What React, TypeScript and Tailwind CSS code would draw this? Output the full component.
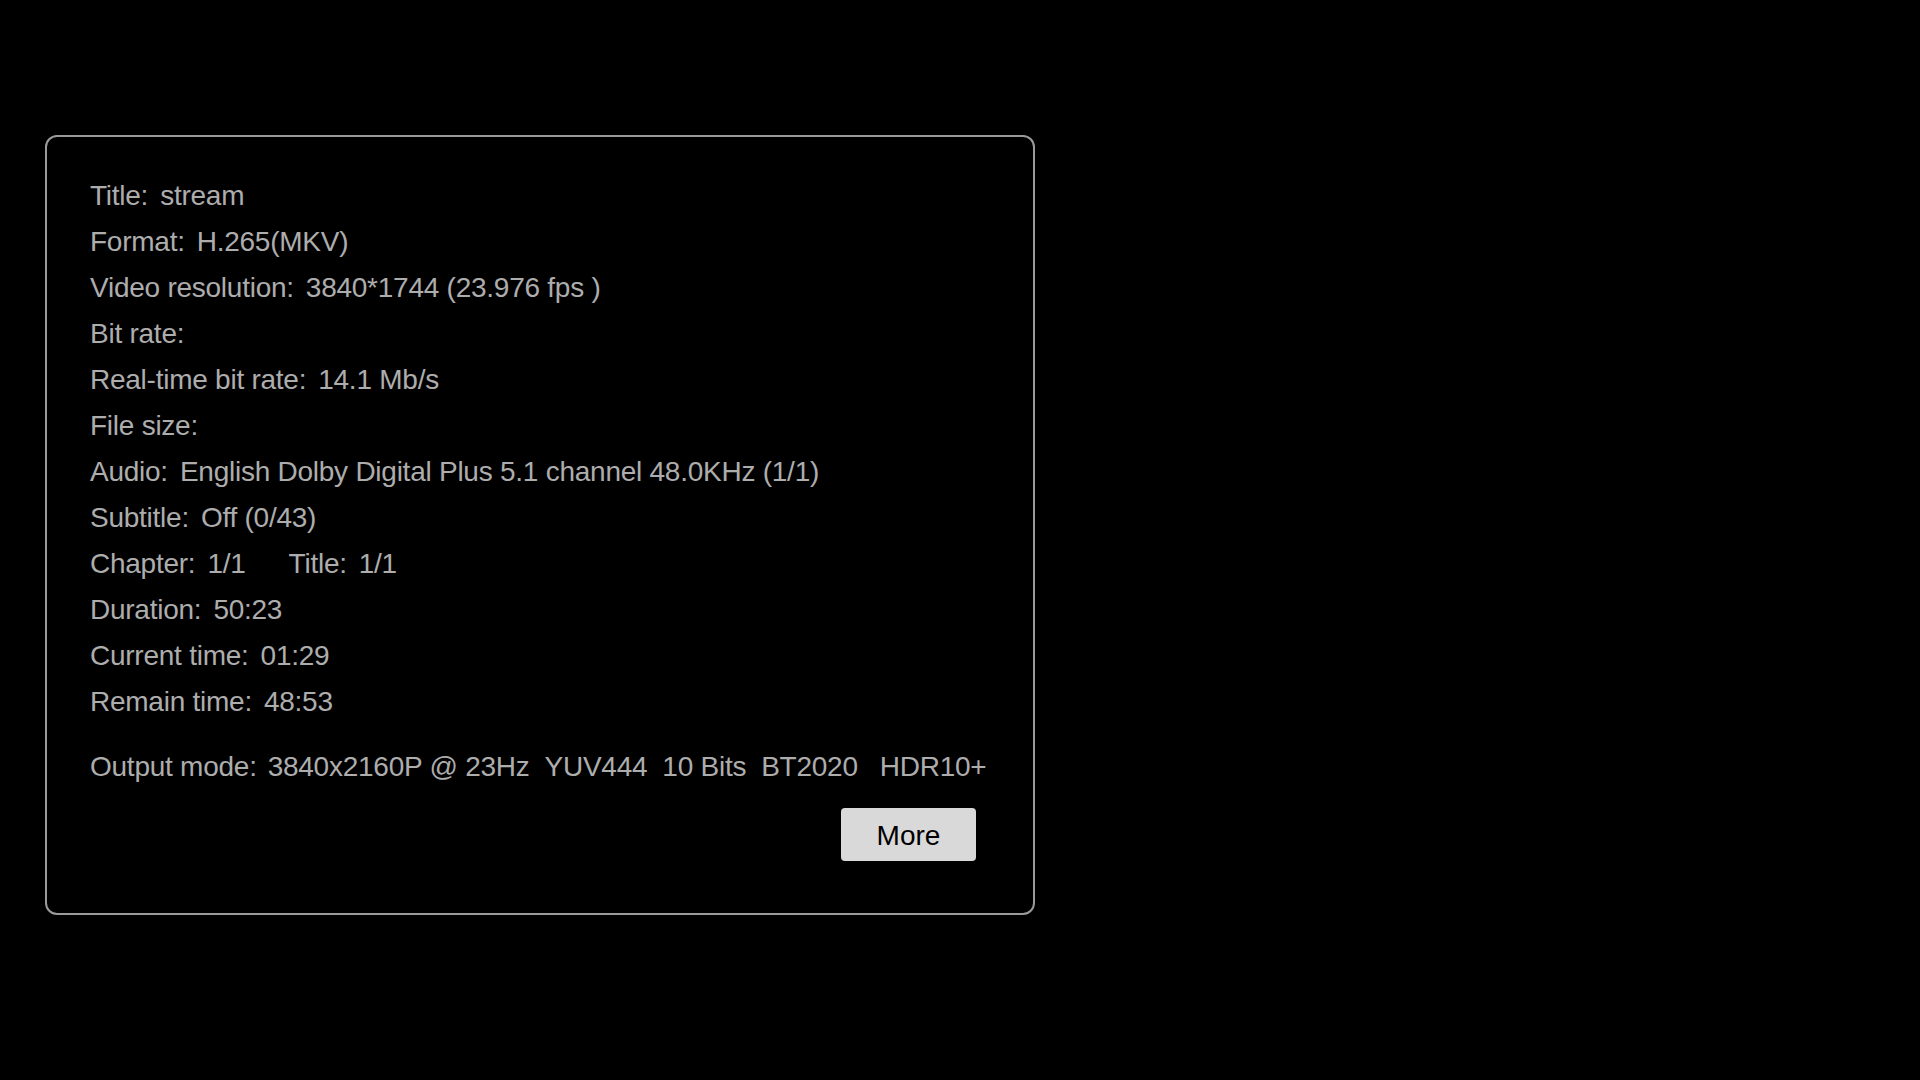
import React from "react";

const rows: [string, string][] = [
  ["Title:", "stream"],
  ["Format:", "H.265(MKV)"],
  ["Video resolution:", "3840*1744 (23.976 fps )"],
  ["Bit rate:", ""],
  ["Real-time bit rate:", "14.1 Mb/s"],
  ["File size:", ""],
  ["Audio:", "English Dolby Digital Plus 5.1 channel 48.0KHz (1/1)"],
  ["Subtitle:", "Off (0/43)"],
];

const rows2: [string, string][] = [
  ["Duration:", "50:23"],
  ["Current time:", "01:29"],
  ["Remain time:", "48:53"],
];

function Row({ label, value }: { label: string; value: string }) {
  return (
    <div className="flex h-[46px] items-center whitespace-nowrap">
      <span>{label}</span>
      {value && <span className="ml-[12px]">{value}</span>}
    </div>
  );
}

export default function App() {
  return (
    <div
      className="w-[1920px] h-[1080px] bg-black pt-[135px] pl-[45px]"
      style={{ fontFamily: '"Liberation Sans", Arial, sans-serif' }}
    >
      <div className="w-[990px] h-[780px] rounded-[12px] border-2 border-[#9a9a9a] pt-[36px] pl-[43px] pr-[57px] flex flex-col text-[28px] tracking-[-0.25px] text-[#adadad]">
        {rows.map(([l, v]) => (
          <Row key={l} label={l} value={v} />
        ))}
        <div className="flex h-[46px] items-center whitespace-nowrap">
          <span>Chapter:</span>
          <span className="ml-[12px]">1/1</span>
          <span className="ml-[43px]">Title:</span>
          <span className="ml-[12px]">1/1</span>
        </div>
        {rows2.map(([l, v]) => (
          <Row key={l} label={l} value={v} />
        ))}
        <div className="mt-[19px] flex h-[46px] items-center whitespace-nowrap">
          <span>Output mode:</span>
          <span className="ml-[11px]">3840x2160P @ 23Hz</span>
          <span className="ml-[15px]">YUV444</span>
          <span className="ml-[15px]">10 Bits</span>
          <span className="ml-[15px]">BT2020</span>
          <span className="ml-[22px]">HDR10+</span>
        </div>
        <div className="mt-[18px] flex justify-end">
          <button className="w-[135px] h-[53px] rounded-[4px] bg-[#d9d9d9] text-black text-[28px] tracking-normal flex items-center justify-center pt-[2px]">
            More
          </button>
        </div>
      </div>
    </div>
  );
}
